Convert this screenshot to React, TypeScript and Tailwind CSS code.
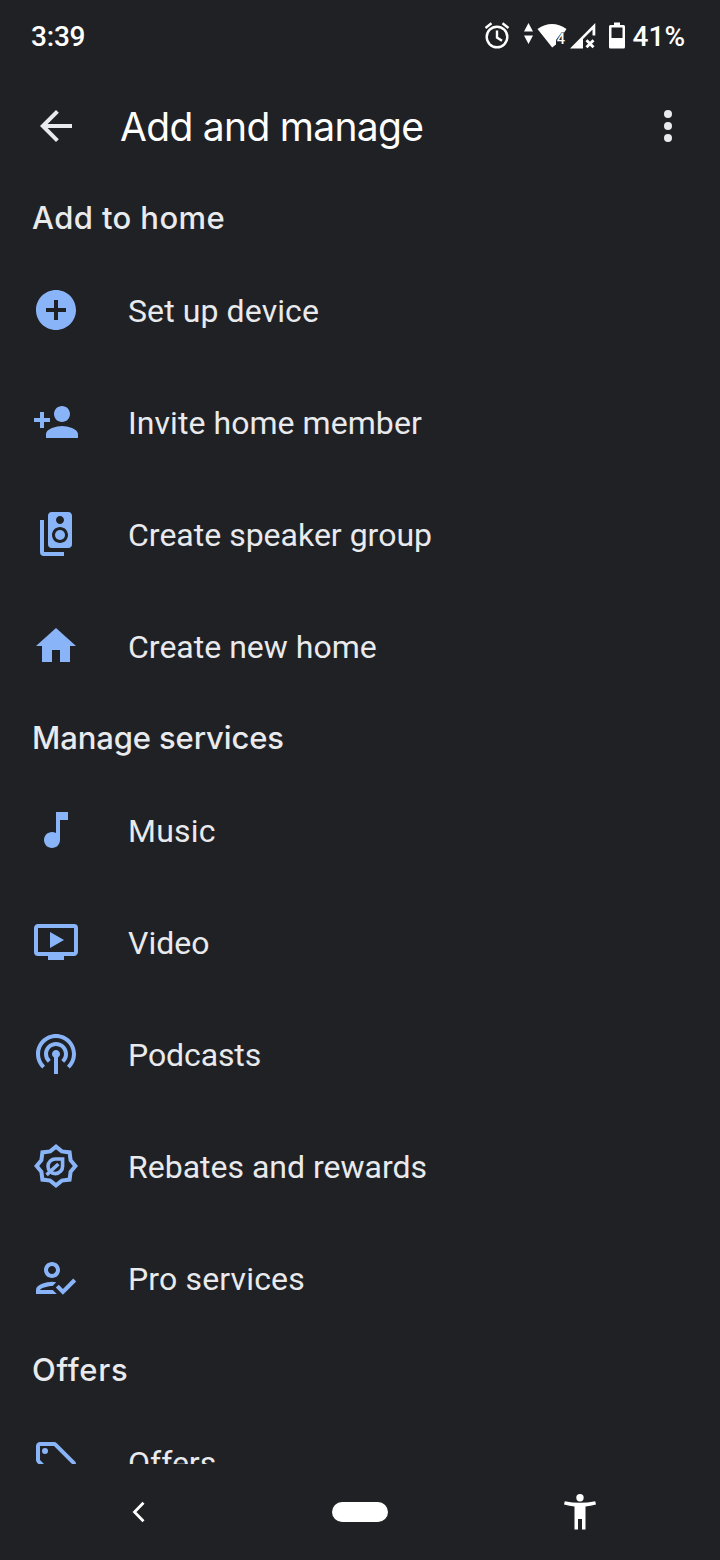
import type { ReactNode } from "react";
import {
  MdAddCircle,
  MdHome,
  MdMusicNote,
  MdOndemandVideo,
  MdPersonAdd,
  MdPodcasts,
  MdSpeakerGroup,
} from "react-icons/md";

type Item = { label: string; icon: ReactNode; tracking?: string };
type Group = { title: string; tracking: string; items: Item[] };

/* ── Icons the set doesn't have ────────────────────────────────────────── */
function RewardsIcon() {
  return (
    <svg viewBox="0 0 24 24" className="size-12" fill="none" stroke="currentColor" strokeWidth="2">
      <path d="M12 2.3l2.9 2.4 3.9.5.5 3.9 2.4 2.9-2.4 2.9-.5 3.9-3.9.5-2.9 2.4-2.9-2.4-3.9-.5-.5-3.9L2.3 12l2.4-2.9.5-3.9 3.9-.5z" />
      <path d="M15.3 8.5h-3.5a3.65 3.65 0 1 0 3.5 3.5z" strokeWidth="1.8" />
      <path d="M7.3 16.4l5.9-5.4" strokeWidth="1.8" />
    </svg>
  );
}

function ProIcon() {
  return (
    <svg viewBox="0 0 24 24" className="size-12" fill="currentColor">
      <path d="M10 12c2.21 0 4-1.79 4-4s-1.79-4-4-4-4 1.79-4 4 1.79 4 4 4zm0-6c1.1 0 2 .9 2 2s-.9 2-2 2-2-.9-2-2 .9-2 2-2z" />
      <path d="M4 18c.22-.72 3.31-2 6.3-2l1.8-1.85C11.4 14.03 10.6 13.900 10 13.900c-2.67 0-8 1.340-8 4.100v2h10.400l-2-2z" />
      <path d="M20.600 12.300l-5.130 5.170-2.070-2.080L11.900 16.800l3.570 3.600L22.100 13.710z" />
    </svg>
  );
}

function TagIcon() {
  return (
    <svg viewBox="0 0 24 24" className="size-12" fill="currentColor">
      <path d="M21.410 11.580l-9-9C12.050 2.220 11.550 2 11 2H4c-1.100 0-2 .9-2 2v7c0 .55.220 1.050.590 1.420l9 9c.360.360.860.580 1.410.580s1.050-.220 1.410-.590l7-7c.370-.360.590-.860.590-1.410s-.230-1.060-.590-1.420zM13 20.010L4 11V4h7v-.010l9 9-7 7.020z" />
      <circle cx="6.500" cy="6.500" r="1.500" />
    </svg>
  );
}

const GROUPS: Group[] = [
  {
    title: "Add to home",
    tracking: "tracking-[0.4px]",
    items: [
      { label: "Set up device", icon: <MdAddCircle className="size-12" />, tracking: "tracking-[0.1px]" },
      { label: "Invite home member", icon: <MdPersonAdd className="size-12" />, tracking: "tracking-[0.06px]" },
      { label: "Create speaker group", icon: <MdSpeakerGroup className="size-12" /> },
      { label: "Create new home", icon: <MdHome className="size-12" /> },
    ],
  },
  {
    title: "Manage services",
    tracking: "tracking-[-0.12px]",
    items: [
      { label: "Music", icon: <MdMusicNote className="size-12" />, tracking: "tracking-[0.2px]" },
      { label: "Video", icon: <MdOndemandVideo className="size-12" /> },
      { label: "Podcasts", icon: <MdPodcasts className="size-12" />, tracking: "tracking-[-0.1px]" },
      { label: "Rebates and rewards", icon: <RewardsIcon /> },
      { label: "Pro services", icon: <ProIcon />, tracking: "tracking-[0.15px]" },
    ],
  },
  {
    title: "Offers",
    tracking: "tracking-[0.7px]",
    items: [{ label: "Offers", icon: <TagIcon /> }],
  },
];

function StatusBar() {
  return (
    <div className="flex h-[70px] shrink-0 items-center justify-between pr-[35px] pl-[31px] pt-[3px] text-[28px] font-medium text-white">
      <span className="tracking-[-0.2px]">3:39</span>
      <div className="flex items-center">
        <svg width="150" height="32" viewBox="480 20.5 150 32" fill="#fff">
          {/* alarm */}
          <g fill="none" stroke="#fff" strokeWidth="2.4">
            <circle cx="497" cy="36.500" r="10.300" />
            <path d="M497 30v7l5 3.200" />
            <path d="M485.500 27.500l6-4.700M508.500 27.500l-6-4.700" />
          </g>
          {/* data arrows */}
          <path d="M528.500 22.500l4.500 8.500h-9zM528.500 43.500l-4.500-8.500h9z" />
          {/* wifi */}
          <path d="M537.500 28.500q14.500-10 29 0l-2.300 3.500h-2.700l-5.500 7.500v4.500l-3.800 3z" />
          <text x="556.800" y="43.500" fontSize="14.500" fontWeight="500">4</text>
          {/* signal */}
          <path d="M595.300 22.500v12.500h-2.800v-6l-9.500 9.500v9.500H570z" />
          <path d="M586.500 39.700l7 7M593.500 39.700l-7 7" stroke="#fff" strokeWidth="2.800" />
          {/* battery */}
          <path fillRule="evenodd" d="M614 22h6v2.500h3.500q1.500 0 1.500 1.500v20.500q0 1.500-1.500 1.500h-13q-1.500 0-1.500-1.500V26q0-1.500 1.500-1.500h3.500zM611.500 27v10.500h11V27z" />
        </svg>
        <span className="ml-[3px]">41%</span>
      </div>
    </div>
  );
}

function TopBar() {
  return (
    <header className="flex h-28 shrink-0 items-center pr-7 pl-8">
      <button aria-label="Back" className="text-[#e8eaed]">
        <svg viewBox="0 0 24 24" className="size-12" fill="currentColor">
          <path d="M20 11H7.830l5.590-5.590L12 4l-8 8 8 8 1.410-1.410L7.830 13H20v-2z" />
        </svg>
      </button>
      <h1 className="ml-10 grow font-['Inter',sans-serif] text-[39px] leading-none tracking-[-0.7px] text-white">
        Add and manage
      </h1>
      <button aria-label="More options" className="text-[#e8eaed]">
        <svg viewBox="0 0 24 24" className="size-12" fill="currentColor">
          <circle cx="12" cy="6" r="2" />
          <circle cx="12" cy="12" r="2" />
          <circle cx="12" cy="18" r="2" />
        </svg>
      </button>
    </header>
  );
}

function NavBar() {
  return (
    <nav className="grid h-24 shrink-0 grid-cols-3 items-center justify-items-center px-[30px]">
      <svg width="16" height="22" viewBox="0 0 16 22" fill="none" stroke="#fff" strokeWidth="2.800">
        <path d="M11.500 1.800L2.500 11l9 9.200" />
      </svg>
      <div className="h-5 w-14 rounded-full bg-white" />
      <svg width="32" height="36" viewBox="0 0 32 36" fill="#fff">
        <circle cx="16" cy="3.700" r="3.700" />
        <path d="M.800 7.200Q16 10.200 31.200 7.200L32 10.500Q26.500 12 21.500 12.500V35.500H18V25h-4v10.500h-3.500v-23Q5.500 12 0 10.500z" />
      </svg>
    </nav>
  );
}

export default function App() {
  return (
    <div className="flex h-[1560px] w-[720px] flex-col overflow-hidden bg-[#202125] font-['Roboto',sans-serif]">
      <StatusBar />
      <TopBar />
      <main className="min-h-0 grow overflow-hidden">
        {GROUPS.map((group) => (
          <section key={group.title}>
            <h2 className={`flex h-[72px] items-center pl-8 font-['Inter',sans-serif] text-[31px] font-medium text-[#e8eaed] ${group.tracking}`}>
              {group.title}
            </h2>
            {group.items.map((item) => (
              <div key={item.label} className="flex h-28 items-center gap-12 pl-8 text-[#8ab4f8]">
                {item.icon}
                <span className={`pt-0.5 text-[32px] text-[#e8eaed] ${item.tracking ?? ""}`}>{item.label}</span>
              </div>
            ))}
          </section>
        ))}
      </main>
      <NavBar />
    </div>
  );
}
